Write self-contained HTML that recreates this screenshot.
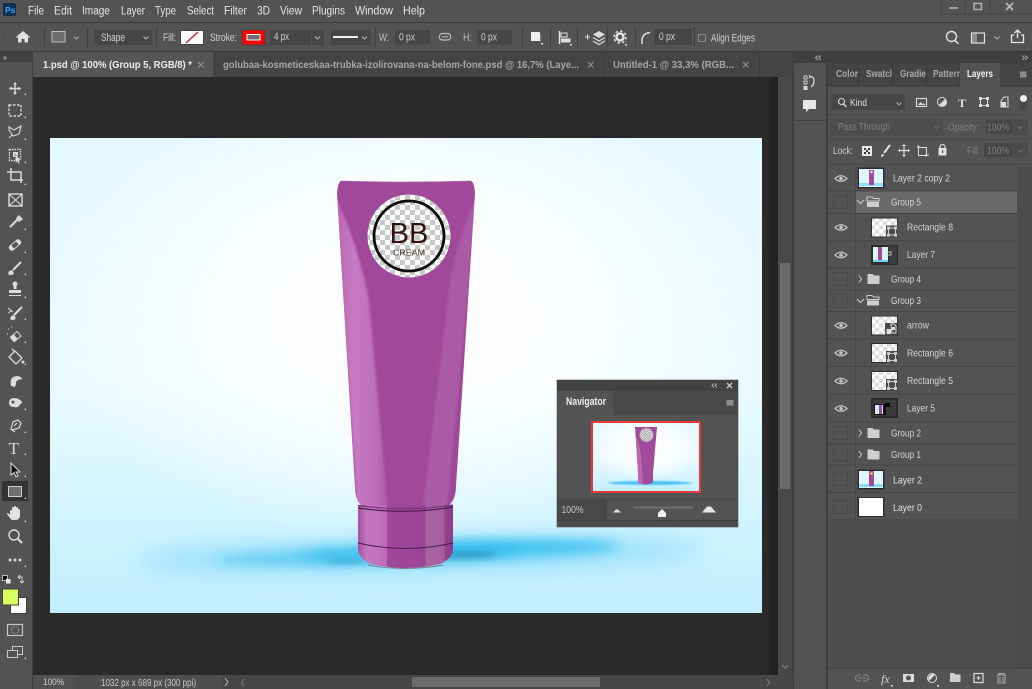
<!DOCTYPE html>
<html><head><meta charset="utf-8"><style>
html,body{margin:0;padding:0;background:#535353;width:1032px;height:689px;overflow:hidden}
svg{display:block;position:absolute;left:0;top:0}
text{font-family:"Liberation Sans",sans-serif;font-size:10.5px;fill:#d8d8d8}
.m{font-size:11.5px;fill:#e4e4e4}
.o{font-size:11px;fill:#cfcfcf}
.tb{font-size:10.5px;font-weight:bold;fill:#a6a6a6}
.l{font-size:10.5px;fill:#d4d4d4}
.t{font-size:10.5px;fill:#a8a8a8;font-weight:bold}
</style></head><body>
<svg width="1032" height="689" viewBox="0 0 1032 689" xmlns="http://www.w3.org/2000/svg">
<defs>
<pattern id="ck" width="10" height="10" patternUnits="userSpaceOnUse"><rect width="10" height="10" fill="#fff"/><rect width="5" height="5" fill="#c8c8c8"/><rect x="5" y="5" width="5" height="5" fill="#c8c8c8"/></pattern>
<pattern id="ck2" width="8" height="8" patternUnits="userSpaceOnUse"><rect width="8" height="8" fill="#fff"/><rect width="4" height="4" fill="#dcdcdc"/><rect x="4" y="4" width="4" height="4" fill="#dcdcdc"/></pattern>
<pattern id="ck3" width="2.400" height="2.400" patternUnits="userSpaceOnUse"><rect width="2.400" height="2.400" fill="#eee"/><rect width="1.200" height="1.200" fill="#999"/><rect x="1.200" y="1.200" width="1.200" height="1.200" fill="#999"/></pattern>
<filter id="b1" x="-30%" y="-200%" width="160%" height="500%"><feGaussianBlur stdDeviation=".8"/></filter>
<filter id="b5" x="-30%" y="-30%" width="160%" height="160%"><feGaussianBlur stdDeviation="1.300"/></filter>
<filter id="b10" x="-30%" y="-300%" width="160%" height="700%"><feGaussianBlur stdDeviation="6"/></filter>
<filter id="b20" x="-30%" y="-300%" width="160%" height="700%"><feGaussianBlur stdDeviation="12"/></filter>
<filter id="b4" x="-30%" y="-300%" width="160%" height="700%"><feGaussianBlur stdDeviation="3"/></filter>
<linearGradient id="bgv" x1="0" y1="0" x2="0" y2="1"><stop offset="0" stop-color="#e4f8ff"/><stop offset=".5" stop-color="#ebfaff"/><stop offset=".78" stop-color="#d3f4ff"/><stop offset="1" stop-color="#c1eeff"/></linearGradient>
<radialGradient id="bgr" cx=".5" cy=".36" r=".5"><stop offset="0" stop-color="#fff"/><stop offset=".55" stop-color="#fff" stop-opacity=".75"/><stop offset="1" stop-color="#fff" stop-opacity="0"/></radialGradient>
<clipPath id="bodyclip"><path d="M341 181Q406 183 471 181Q474 182 475 193L456 486Q456 500 448 506H362Q355 500 355 486L337 193Q338 182 341 181Z"/></clipPath>
<linearGradient id="hl" x1="0" y1="0" x2="1" y2="0"><stop offset="0" stop-color="#bb68b6"/><stop offset=".35" stop-color="#cd82c9"/><stop offset=".8" stop-color="#c070bb"/><stop offset="1" stop-color="#ac58a7"/></linearGradient>
<linearGradient id="capg" x1="0" y1="0" x2="1" y2="0"><stop offset="0" stop-color="#a550a0"/><stop offset=".1" stop-color="#c478bf"/><stop offset=".3" stop-color="#c06cbb"/><stop offset=".31" stop-color="#a0479a"/><stop offset=".7" stop-color="#9b4595"/><stop offset=".72" stop-color="#aa62a5"/><stop offset=".9" stop-color="#a55fa0"/><stop offset=".92" stop-color="#954190"/><stop offset="1" stop-color="#8e3c88"/></linearGradient>
<g id="chk"><rect x="-7.500" y="-6.500" width="14" height="13" fill="none" stroke="#494949" stroke-width="1"/></g>
<g id="eye"><path d="M-6 0Q0 -5.500 6 0Q0 5.500 -6 0Z" fill="none" stroke="#c4c4c4" stroke-width="1.200"/><circle r="1.800" fill="#c4c4c4"/></g>
<g id="fold"><path d="M-6 -5h5l1.500 1.500h5.500v8.500h-12z" fill="#cfcfcf"/></g>
<g id="foldo"><path d="M-6 -5h5l1.500 1.500h5.500v2.500h-12z" fill="none" stroke="#cfcfcf"/><rect x="-6" y="0" width="12" height="5" fill="#cfcfcf"/></g>
<g id="vmask"><rect x="0" y="0" width="27" height="20" fill="#2d2d2d"/><rect x="1" y="1" width="25" height="18" fill="url(#ck2)"/></g>
<g id="shp"><rect x="15" y="8" width="12" height="12" fill="#4a4a4a"/><rect x="17.500" y="10.500" width="7" height="7" fill="none" stroke="#ccc" stroke-width="1"/><g fill="#ccc"><rect x="16" y="9" width="3" height="3"/><rect x="23" y="9" width="3" height="3"/><rect x="16" y="16" width="3" height="3"/><rect x="23" y="16" width="3" height="3"/></g></g>
<path id="tri" d="M0 2h2v-2z" fill="#cfcfcf"/>
</defs>

<rect width="1032" height="689" fill="#535353"/>
<!-- menu bar -->
<rect x="0" y="22" width="1032" height="1" fill="#3a3a3a"/>
<rect x="3" y="3" width="13" height="13" rx="1.500" fill="#0e2f52"/>
<text x="5" y="13" style="font-size:8.500px;font-weight:bold;fill:#31a8ff">Ps</text>
<text class="m" x="28" y="14.500" textLength="16" lengthAdjust="spacingAndGlyphs">File</text><text class="m" x="54" y="14.500" textLength="18" lengthAdjust="spacingAndGlyphs">Edit</text><text class="m" x="82" y="14.500" textLength="28" lengthAdjust="spacingAndGlyphs">Image</text><text class="m" x="121" y="14.500" textLength="24" lengthAdjust="spacingAndGlyphs">Layer</text><text class="m" x="155" y="14.500" textLength="21" lengthAdjust="spacingAndGlyphs">Type</text><text class="m" x="187" y="14.500" textLength="27" lengthAdjust="spacingAndGlyphs">Select</text><text class="m" x="224" y="14.500" textLength="23" lengthAdjust="spacingAndGlyphs">Filter</text><text class="m" x="257" y="14.500" textLength="13" lengthAdjust="spacingAndGlyphs">3D</text><text class="m" x="280" y="14.500" textLength="22" lengthAdjust="spacingAndGlyphs">View</text><text class="m" x="312" y="14.500" textLength="33" lengthAdjust="spacingAndGlyphs">Plugins</text><text class="m" x="355" y="14.500" textLength="38" lengthAdjust="spacingAndGlyphs">Window</text><text class="m" x="403" y="14.500" textLength="22" lengthAdjust="spacingAndGlyphs">Help</text>
<path d="M941 0v14h91M965 0v14M990 0v14" fill="none" stroke="#454545"/>
<rect x="949" y="7" width="9" height="2" fill="#9a9a9a"/>
<rect x="974" y="3.500" width="7.500" height="6" fill="none" stroke="#b0b0b0" stroke-width="1.500"/>
<path d="M1006 3l7 7M1013 3l-7 7" stroke="#b8b8b8" stroke-width="1.800"/>

<!-- options bar -->
<path d="M23 31l-7.500 6.500h2.500v5h3.500v-3.500h3v3.500h3.500v-5h2.500z" fill="#e2e2e2"/>
<path d="M3.500 29v15" stroke="#484848" stroke-dasharray="1 1"/>
<g stroke="#404040"><path d="M44.500 27v20M87.500 27v20M156.500 27v20M375.500 27v20M522.500 27v20M550.500 27v20M577.500 27v20M607.500 27v20M635.500 27v20M694.500 27v20"/></g>
<rect x="52" y="31.500" width="13" height="10.500" fill="#6c6c6c" stroke="#bdbdbd" stroke-width="1"/>
<path d="M74 36.500l2.500 2.500 2.500-2.500" fill="none" stroke="#aaa"/>
<rect x="94" y="30" width="58" height="15" fill="#464646"/><text class="o" x="101" y="41" textLength="24" lengthAdjust="spacingAndGlyphs">Shape</text>
<path d="M143.500 36.500l2.500 2.500 2.500-2.500" fill="none" stroke="#bbb"/>
<text class="o" x="163" y="41" textLength="13" lengthAdjust="spacingAndGlyphs">Fill:</text>
<rect x="180" y="30" width="24" height="15" fill="#3f3f3f"/><rect x="181" y="31" width="22" height="13" fill="#fff"/><path d="M186 43l12-11" stroke="#d8232a" stroke-width="1.500"/>
<text class="o" x="210" y="41" textLength="27" lengthAdjust="spacingAndGlyphs">Stroke:</text>
<rect x="242" y="30" width="23" height="15" fill="#ff0000" stroke="#444" stroke-width="1"/><rect x="247" y="34.500" width="13" height="5.500" fill="#6f6f6f" stroke="#fff" stroke-width="1"/>
<rect x="270" y="30" width="41" height="15" fill="#464646"/><rect x="312" y="30" width="12" height="15" fill="#464646"/><text class="o" x="274" y="40" textLength="15" lengthAdjust="spacingAndGlyphs">4 px</text>
<path d="M315 36.500l2.500 2.500 2.500-2.500" fill="none" stroke="#bbb"/>
<rect x="331" y="30" width="40" height="15" fill="#464646"/><rect x="333" y="36" width="25" height="2" fill="#f0f0f0"/><path d="M362 36.500l2.500 2.500 2.500-2.500" fill="none" stroke="#bbb"/>
<text class="o" x="379" y="41" style="fill:#bdbdbd" textLength="10" lengthAdjust="spacingAndGlyphs">W:</text>
<rect x="395" y="30" width="35" height="14.500" fill="#464646"/><text class="o" x="399" y="40.500" textLength="16" lengthAdjust="spacingAndGlyphs">0 px</text>
<path d="M445 33.500h-2.500a3.200 3.200 0 0 0 0 6.500h2.500M445 33.500h2.500a3.200 3.200 0 0 1 0 6.500h-2.500M442 36.800h6" fill="none" stroke="#bdbdbd" stroke-width="1.200"/>
<text class="o" x="463" y="41" style="fill:#bdbdbd" textLength="9" lengthAdjust="spacingAndGlyphs">H:</text>
<rect x="477" y="30" width="35" height="14.500" fill="#464646"/><text class="o" x="481" y="40.500" textLength="16" lengthAdjust="spacingAndGlyphs">0 px</text>
<rect x="531" y="32" width="9" height="9" fill="#efefef"/><rect x="540" y="34" width="1.500" height="8" fill="#777"/><rect x="541" y="43" width="2" height="1.500" fill="#ddd"/>
<path d="M559.500 31v13" stroke="#e0e0e0" stroke-width="1.500"/><rect x="561" y="33" width="6" height="4" fill="none" stroke="#e0e0e0"/><rect x="561" y="38.500" width="9.500" height="4" fill="#e0e0e0"/><rect x="570" y="44" width="2" height="1.500" fill="#ddd"/>
<path d="M585 37h5M587.500 34.500v5" stroke="#ddd"/><path d="M593 34.500l6-3.500 6 3.500-6 3.500z" fill="#ddd"/><path d="M593 37.500l6 3.500 6-3.500M593 41l6 3.500 6-3.500" fill="none" stroke="#ddd" stroke-width="1.200"/>
<circle cx="620" cy="37" r="3.500" fill="none" stroke="#e2e2e2" stroke-width="2.500"/><circle cx="620" cy="37" r="6" fill="none" stroke="#e2e2e2" stroke-width="1.500" stroke-dasharray="2.400 2.300"/><rect x="625" y="44" width="2" height="1.500" fill="#ddd"/>
<path d="M642 44v-3.500q0-7 8-8" fill="none" stroke="#e0e0e0" stroke-width="1.500"/>
<rect x="655" y="29.500" width="36" height="14.500" fill="#464646" stroke="#3c3c3c"/><text class="o" x="659" y="40" textLength="16" lengthAdjust="spacingAndGlyphs">0 px</text>
<rect x="698.500" y="34.500" width="7" height="7" rx="1" fill="none" stroke="#8a8a8a"/>
<text class="o" x="711" y="41.500" textLength="44" lengthAdjust="spacingAndGlyphs">Align Edges</text>
<circle cx="951.500" cy="36.500" r="5" fill="none" stroke="#e2e2e2" stroke-width="1.400"/><path d="M955 40.500l3.500 3.500" stroke="#e2e2e2" stroke-width="1.500"/>
<rect x="971.500" y="33" width="13" height="10" fill="none" stroke="#e2e2e2" stroke-width="1.200"/><rect x="972" y="33.500" width="5" height="9" fill="#8e8e8e"/>
<path d="M994.500 36.500l2.500 2.500 2.500-2.500" fill="none" stroke="#aaa"/>
<path d="M1014 35h-2.500v7.500h12v-7.500h-2.500M1017.500 38v-7M1014.500 33l3-3 3 3" fill="none" stroke="#e6e6e6" stroke-width="1.300"/>
<rect x="0" y="51" width="1032" height="1" fill="#3c3c3c"/>

<!-- tab row -->
<rect x="33" y="52" width="760" height="25" fill="#444"/>
<rect x="33" y="52" width="180" height="25" fill="#555"/>
<text x="43" y="68" style="font-size:10.500px;font-weight:bold;fill:#ededed" textLength="149" lengthAdjust="spacingAndGlyphs">1.psd @ 100% (Group 5, RGB/8) *</text>
<path d="M198 62l5.500 5.500M203.500 62l-5.500 5.500" stroke="#999" stroke-width=".9"/>
<text class="tb" x="223" y="68" textLength="356" lengthAdjust="spacingAndGlyphs">golubaa-kosmeticeskaa-trubka-izolirovana-na-belom-fone.psd @ 16,7% (Laye...</text>
<path d="M588 62l5.500 5.500M593.500 62l-5.500 5.500" stroke="#999" stroke-width=".9"/>
<path d="M603.500 52v25M759.500 52v25" stroke="#3c3c3c"/>
<text class="tb" x="613" y="68" textLength="121" lengthAdjust="spacingAndGlyphs">Untitled-1 @ 33,3% (RGB...</text>
<path d="M743 62l5.500 5.500M748.500 62l-5.500 5.500" stroke="#999" stroke-width=".9"/>

<!-- toolbar -->
<rect x="0" y="52" width="33" height="637" fill="#535353"/>
<rect x="0" y="52" width="32" height="10" fill="#424242"/>
<text x="3" y="60" style="font-size:7px;fill:#b5b5b5;font-weight:bold">»</text>
<path d="M7 65h14" stroke="#484848" stroke-dasharray="1 1"/>
<rect x="32" y="52" width="1" height="637" fill="#3e3e3e"/>

<!-- canvas -->
<rect x="33" y="77" width="745" height="598" fill="#2a2a2a"/>
<rect x="770" y="77" width="8" height="598" fill="#232323"/>
<rect x="778" y="77" width="15" height="598" fill="#494949"/>
<rect x="792" y="77" width="1" height="598" fill="#3e3e3e"/>
<rect x="780" y="263" width="10" height="226" fill="#6b6b6b"/>
<path d="M782 665l3 3 3-3" fill="none" stroke="#888"/>

<!-- image -->
<svg x="50" y="138" width="712" height="475" viewBox="50 138 712 475">
<rect x="50" y="138" width="712" height="475" fill="url(#bgv)"/>
<rect x="50" y="138" width="712" height="475" fill="url(#bgr)"/>
<g transform="rotate(-1.200 420 552)">
<ellipse cx="420" cy="555" rx="285" ry="13" fill="#7ad6f7" opacity=".85" filter="url(#b20)"/>
<ellipse cx="500" cy="550" rx="120" ry="8" fill="#33bdf0" opacity=".9" filter="url(#b10)"/>
<ellipse cx="310" cy="556" rx="95" ry="5" fill="#3fc0ef" opacity=".8" filter="url(#b10)"/>
<ellipse cx="410" cy="553" rx="110" ry="7" fill="#2ab8ec" opacity=".85" filter="url(#b10)"/>
<ellipse cx="470" cy="556" rx="26" ry="3" fill="#2a7ea3" opacity=".6" filter="url(#b4)"/>
<ellipse cx="345" cy="560" rx="22" ry="2" fill="#2a8fbf" opacity=".5" filter="url(#b4)"/>
</g>
<!-- tube body -->
<path d="M341 181Q406 183 471 181Q474 182 475 193L456 486Q456 500 448 506H362Q355 500 355 486L337 193Q338 182 341 181Z" fill="#a0489a"/>
<g clip-path="url(#bodyclip)">
<path d="M336 197Q358 245 369 300L388 508H350L336 300Z" fill="url(#hl)" opacity=".9" filter="url(#b5)"/>
<path d="M337 230L358 506H350L335 260Z" fill="#a0489a" opacity=".55" filter="url(#b5)"/>
<path d="M476 197Q455 245 449 290L423 508H447L468 290Z" fill="#b26bad" opacity=".6" filter="url(#b5)"/>
</g>
<path d="M341 181Q406 183 471 181" fill="none" stroke="#b569b0" stroke-width=".8"/>
<!-- cap -->
<path d="M358 505H453V549Q453 558 440 564Q405 572 371 564Q358 558 358 549Z" fill="url(#capg)"/>
<path d="M368 565Q405 572 443 565" fill="none" stroke="#6b5a58" stroke-width=".9" opacity=".7"/>
<path d="M358 508Q405 515 453 507" fill="none" stroke="#4f1f4d" stroke-width="1.300"/>
<path d="M358 505.500Q405 512 453 505" fill="none" stroke="#7c3479" stroke-width="1.300"/>
<path d="M358 543Q405 554 453 543" fill="none" stroke="#4a1a48" stroke-width="1"/>
<!-- label -->
<circle cx="409" cy="236" r="41.500" fill="url(#ck)"/>
<circle cx="409" cy="236" r="35" fill="none" stroke="#0c0c0c" stroke-width="2.800"/>
<text x="409" y="243" text-anchor="middle" style="font-size:29px;fill:#33130f">BB</text>
<text x="393" y="255.500" style="font-size:8.500px;fill:#4b3a30" textLength="32" lengthAdjust="spacingAndGlyphs">CREAM</text>
</svg>

<!-- tool icons -->
<g fill="none" stroke="#dcdcdc" stroke-width="1.400">
<path d="M15 83v11M9.500 88.500h11"/><path d="M15 82l-2 2.500h4zM15 95l-2-2.500h4zM9 88.500l2.500-2v4zM21 88.500l-2.500-2v4z" fill="#dcdcdc" stroke="none"/>
<rect x="9" y="105" width="12" height="11" stroke-dasharray="2.500 1.500"/>
<path d="M9 127l5 3 7-4-2 8-6 2-4-6zM12 135l-3 3" stroke-width="1.100"/>
<rect x="9.500" y="149.500" width="11" height="11" stroke-dasharray="1.500 1"/>
<path d="M13 152h5v5h-5z" fill="#dcdcdc" stroke="none"/><path d="M15 154l6 6-2 .5 1 3-1.500.5-1-2.500-2 1.500z" fill="#dcdcdc" stroke="#535353" stroke-width=".5"/>
<path d="M7 172h14v11M11 168v12h12" stroke-width="1.500"/>
<rect x="9" y="194" width="13" height="12"/><path d="M9 194l13 12M22 194l-13 12" stroke-width="1"/>
<path d="M10 227l8-8" stroke-width="2"/><path d="M19 216l3 3-3 2-2-3z" fill="#dcdcdc"/>
<g transform="rotate(-40 15 245)"><rect x="8" y="242" width="14" height="6" rx="2.500" fill="#dcdcdc" stroke="none"/><rect x="12" y="243" width="6" height="4" fill="#535353" stroke="none"/></g>
<path d="M9 274q0-3 3-3l1 2q-1 2-4 1z" fill="#dcdcdc"/><path d="M13 270l8-8" stroke-width="2"/>
<path d="M15 283v6" stroke-width="3"/><circle cx="15" cy="284" r="2.500" fill="#dcdcdc" stroke="none"/><rect x="9" y="290" width="12" height="3" fill="#dcdcdc" stroke="none"/><path d="M9 295.500h12" stroke-width="1"/>
<path d="M11 319q0-3 3-3l1 2q-1 2-4 1z" fill="#dcdcdc"/><path d="M14 315l8-8" stroke-width="2"/><path d="M8 308l5 4M8 313l3-2" stroke-width="1"/>
<g transform="rotate(-40 16 337)"><rect x="11" y="333" width="10" height="7" rx="1" fill="#dcdcdc" stroke="none"/><rect x="16" y="334" width="4" height="5" fill="#535353" stroke="none"/></g><path d="M8 329h1M11 327h1M7 334h1" stroke-width="1"/>
<path d="M9 357l6-6 7 7-6 6z" stroke-width="1.300"/><path d="M12 349l3 3"/><circle cx="23" cy="362" r="1.500" fill="#dcdcdc" stroke="none"/>
<path d="M11 386q-1-6 1-8q2-2 6-2q4 1 4 3l-4 1q-2 1-2 4l-1 3z" fill="#dcdcdc" stroke="none"/>
<path d="M9 403q0-5 5-5q5 0 8 4l-1 2q-1 0-2 2q-2 2-5 1q-5 0-5-4z" fill="#dcdcdc" stroke="none"/><circle cx="13" cy="402" r="1.500" fill="#535353" stroke="none"/>
<path d="M15 432l-4-3 2-7 5-2 3 3-2 5-7 2zM14 426l3-3" stroke-width="1.200"/>
</g>
<text x="8.500" y="454" style="font-family:'Liberation Serif',serif;font-size:17px;fill:#dcdcdc">T</text>
<path d="M11 463v12l3-2.500 2 4.500 2-1-2-4h4z" fill="#111" stroke="#dcdcdc" stroke-width="1"/>
<rect x="2" y="481" width="26" height="20" fill="#333"/>
<rect x="8.500" y="486.500" width="13" height="10" fill="#707070" stroke="#cfcfcf" stroke-width="1"/>
<path d="M10 515v-4q0-1 1-1t1 1l0-3q0-1 1-1t1 1v-1q0-1 1-1t1 1v1q0-1 1-1t1 1v2q0-1 1-1t1 1v5q0 5-5 5h-2q-2 0-3-2l-3-4q0-1 1-1z" fill="#e2e2e2"/>
<circle cx="14" cy="535" r="5" fill="none" stroke="#dcdcdc" stroke-width="1.400"/><path d="M18 539l4 4" stroke="#dcdcdc" stroke-width="2"/>
<g fill="#dcdcdc"><circle cx="10" cy="560" r="1.500"/><circle cx="15" cy="560" r="1.500"/><circle cx="20" cy="560" r="1.500"/></g>
<rect x="2.500" y="575.500" width="5" height="5" fill="#111" stroke="#ddd" stroke-width=".8"/><rect x="6" y="579" width="4.500" height="4.500" fill="#eee"/>
<path d="M18 577h4v5M20 581l2 2 2-2M18 577l2-2M18 577l2 2" fill="none" stroke="#ddd" stroke-width=".9"/>
<rect x="10.500" y="597.500" width="16" height="16" fill="#fff" stroke="#3e3e3e"/>
<rect x="2.500" y="589" width="16" height="16" fill="#d7ff5d" stroke="#3e3e3e"/>
<rect x="7.500" y="624.500" width="15" height="11" fill="none" stroke="#c8c8c8" stroke-width="1.200"/><circle cx="15" cy="630" r="3.500" fill="none" stroke="#9c9c9c" stroke-dasharray="1.500 1"/>
<rect x="12.500" y="646.500" width="10" height="8" fill="#535353" stroke="#c8c8c8"/><rect x="7.500" y="650.500" width="10" height="7" fill="#535353" stroke="#c8c8c8"/>
<g><use href="#tri" x="24" y="93"/><use href="#tri" x="24" y="116"/><use href="#tri" x="24" y="138"/><use href="#tri" x="24" y="161"/><use href="#tri" x="24" y="183"/><use href="#tri" x="24" y="228"/><use href="#tri" x="24" y="251"/><use href="#tri" x="24" y="273"/><use href="#tri" x="24" y="296"/><use href="#tri" x="24" y="318"/><use href="#tri" x="24" y="341"/><use href="#tri" x="24" y="363"/><use href="#tri" x="24" y="408"/><use href="#tri" x="24" y="431"/><use href="#tri" x="24" y="453"/><use href="#tri" x="24" y="475"/><use href="#tri" x="24" y="497"/><use href="#tri" x="24" y="520"/><use href="#tri" x="24" y="565"/><use href="#tri" x="24" y="657"/></g>

<!-- status bar -->
<rect x="33" y="675" width="760" height="14" fill="#474747"/>
<rect x="47" y="675" width="175" height="14" fill="#4e4e4e"/>
<rect x="33" y="675" width="42" height="14" fill="#525252"/>
<text x="43" y="685" style="font-size:9.500px;fill:#cfcfcf" textLength="21" lengthAdjust="spacingAndGlyphs">100%</text>
<text x="101" y="686" style="font-size:10px;fill:#c8c8c8" textLength="95" lengthAdjust="spacingAndGlyphs">1032 px x 689 px (300 ppi)</text>
<path d="M225 678l3 4-3 4" fill="none" stroke="#bbb"/>
<path d="M244 679l-2.500 3.500 2.500 3.500M767 679l2.500 3.500-2.500 3.500" fill="none" stroke="#808080"/>
<rect x="412" y="677" width="188" height="10" fill="#6b6b6b"/>

<!-- dock -->
<rect x="793" y="52" width="239" height="11" fill="#3f3f3f"/>
<path d="M818 55.500l-2.500 2.200 2.500 2.200M821 55.500l-2.500 2.200 2.500 2.200M1022 55.500l2.500 2.200-2.500 2.200M1025 55.500l2.500 2.200-2.500 2.200" fill="none" stroke="#b0b0b0" stroke-width=".9"/>
<rect x="793" y="63" width="1" height="626" fill="#3c3c3c"/>
<rect x="793" y="120" width="34" height="1" fill="#404040"/>
<rect x="826" y="63" width="2" height="626" fill="#3c3c3c"/>
<path d="M801 66h15" stroke="#484848" stroke-dasharray="1 1"/>
<rect x="804" y="76" width="3" height="3" fill="none" stroke="#ddd" stroke-width=".9"/><rect x="804" y="81" width="3" height="3" fill="none" stroke="#ddd" stroke-width=".9"/><rect x="803.500" y="86" width="4" height="4" fill="#ddd"/>
<path d="M809 78l1.500-1.500-1.500-1.500M810 76.500q4 0 4 4.500q0 4-3 6" fill="none" stroke="#ddd" stroke-width="1.200"/>
<path d="M803 100h13v9h-7l-3 3v-3h-3z" fill="#e6e6e6"/>

<!-- panel tabs -->
<rect x="828" y="63" width="204" height="24" fill="#444"/>
<g stroke="#3a3a3a"><path d="M858.500 63v24M892.500 63v24M926.500 63v24M960 63v24"/></g>
<rect x="960" y="63" width="40" height="24" fill="#535353"/>
<text class="t" x="836" y="77" textLength="22" lengthAdjust="spacingAndGlyphs">Color</text>
<text class="t" x="866" y="77" textLength="26" lengthAdjust="spacingAndGlyphs">Swatcl</text>
<text class="t" x="900" y="77" textLength="26" lengthAdjust="spacingAndGlyphs">Gradie</text>
<text class="t" x="933" y="77" textLength="27" lengthAdjust="spacingAndGlyphs">Patterr</text>
<text class="t" x="967" y="77" textLength="26" lengthAdjust="spacingAndGlyphs" style="fill:#f0f0f0">Layers</text>
<rect x="1020" y="71.500" width="6.500" height="6" fill="#8c8c8c"/>

<!-- panel body -->
<rect x="828" y="87" width="204" height="602" fill="#535353"/>
<rect x="1017" y="166" width="15" height="502" fill="#4c4c4c"/>
<rect x="828" y="520" width="189" height="148" fill="#4f4f4f"/>
<rect x="831" y="94.500" width="74" height="15.500" rx="1" fill="#464646"/>
<circle cx="841.500" cy="101.500" r="3" fill="none" stroke="#ddd" stroke-width="1.100"/><path d="M843.500 104l3 3" stroke="#ddd" stroke-width="1.300"/>
<text x="850" y="106" class="l" style="fill:#dedede" textLength="17" lengthAdjust="spacingAndGlyphs">Kind</text>
<path d="M896.500 102.500l2.500 2.500 2.500-2.500" fill="none" stroke="#aaa"/>
<rect x="916.500" y="98.500" width="10" height="8" fill="none" stroke="#dcdcdc" stroke-width="1.100"/><path d="M918 105l2.500-3 2 2 1-1 2 2z" fill="#dcdcdc"/>
<circle cx="942" cy="102" r="4.500" fill="none" stroke="#dcdcdc"/><path d="M942 97.500a4.500 4.500 0 0 1 0 9z" fill="#dcdcdc" transform="rotate(45 942 102)"/>
<text x="958" y="107" style="font-family:'Liberation Serif',serif;font-size:12px;fill:#dcdcdc;font-weight:bold">T</text>
<rect x="980.500" y="98.500" width="7" height="7" fill="none" stroke="#dcdcdc"/><g fill="#dcdcdc"><rect x="979" y="97" width="3" height="3"/><rect x="986" y="97" width="3" height="3"/><rect x="979" y="104" width="3" height="3"/><rect x="986" y="104" width="3" height="3"/></g>
<path d="M1004 97h4v10h-7v-6z" fill="none" stroke="#dcdcdc"/><rect x="1001" y="102" width="5" height="5" fill="#dcdcdc"/>
<rect x="1020" y="95" width="7" height="15" rx="3.500" fill="#464646"/><circle cx="1023.500" cy="98.500" r="3.500" fill="#eee"/>
<rect x="828" y="114" width="189" height="1" fill="#494949"/>
<rect x="831" y="119" width="111" height="16" rx="1" fill="#4e4e4e" stroke="#4a4a4a"/>
<text x="838" y="130" style="font-size:10.500px;fill:#808080" textLength="52" lengthAdjust="spacingAndGlyphs">Pass Through</text>
<path d="M934 126l2.500 2.500 2.500-2.500" fill="none" stroke="#707070"/>
<text x="948" y="130.500" style="font-size:10.500px;fill:#808080" textLength="31" lengthAdjust="spacingAndGlyphs">Opacity:</text>
<rect x="986" y="120" width="27" height="14" fill="#474747"/><text x="987" y="130.500" style="font-size:10.500px;fill:#7e7e7e" textLength="22" lengthAdjust="spacingAndGlyphs">100%</text>
<rect x="1014" y="120" width="13" height="14" fill="#4b4b4b" stroke="#484848"/><path d="M1018 126l2.500 2.500 2.500-2.500" fill="none" stroke="#707070"/>
<rect x="828" y="138.500" width="204" height="1" fill="#494949"/>
<text x="833" y="154" style="font-size:10.500px;fill:#cfcfcf" textLength="20" lengthAdjust="spacingAndGlyphs">Lock:</text>
<rect x="862" y="146" width="10" height="10" fill="#e8e8e8"/><g fill="#3a3a3a"><rect x="864" y="148" width="2" height="2"/><rect x="868" y="148" width="2" height="2"/><rect x="866" y="150" width="2" height="2"/><rect x="864" y="152" width="2" height="2"/><rect x="868" y="152" width="2" height="2"/></g>
<path d="M881 157q0-3 2-3l1 1q-1 2-3 2z" fill="#ddd"/><path d="M884 153l6-8" stroke="#ddd" stroke-width="2"/>
<path d="M904 145v11M898.500 150.500h11" stroke="#ddd" stroke-width="1.200"/><path d="M904 144l-2 2h4zM904 157l-2-2h4zM898 150.500l2-2v4zM910 150.500l-2-2v4z" fill="#ddd"/>
<path d="M918.500 147.500h8v8h-8z" fill="none" stroke="#ddd"/><path d="M917 147h3M926 155h3M918 145v3M926 154v3" stroke="#ddd"/>
<path d="M940 148v-1a2.500 2.500 0 0 1 5 0v1" fill="none" stroke="#ddd" stroke-width="1.200"/><rect x="938.500" y="148" width="8" height="7.500" fill="#e2e2e2"/><rect x="942" y="150" width="1.200" height="3" fill="#535353"/>
<text x="967" y="154" style="font-size:10.500px;fill:#808080" textLength="13" lengthAdjust="spacingAndGlyphs">Fill:</text>
<rect x="984" y="143" width="29" height="14" fill="#474747"/><text x="987" y="154" style="font-size:10.500px;fill:#7e7e7e" textLength="22" lengthAdjust="spacingAndGlyphs">100%</text>
<rect x="1014" y="143" width="13" height="14" fill="#4b4b4b" stroke="#484848"/><path d="M1018 149.500l2.500 2.500 2.500-2.500" fill="none" stroke="#707070"/>
<rect x="828" y="164" width="204" height="1" fill="#484848"/>

<!-- layer rows -->
<rect x="855" y="191" width="162" height="22" fill="#6a6a6a"/>
<g fill="#464646">
<rect x="828" y="190.500" width="189" height="1"/><rect x="828" y="213" width="189" height="1"/><rect x="828" y="240.500" width="189" height="1"/><rect x="828" y="267.500" width="189" height="1"/><rect x="828" y="289.500" width="189" height="1"/><rect x="828" y="311" width="189" height="1"/><rect x="828" y="338.500" width="189" height="1"/><rect x="828" y="366" width="189" height="1"/><rect x="828" y="393.500" width="189" height="1"/><rect x="828" y="421.500" width="189" height="1"/><rect x="828" y="443.500" width="189" height="1"/><rect x="828" y="464.500" width="189" height="1"/><rect x="828" y="492" width="189" height="1"/><rect x="828" y="519.500" width="189" height="1"/>
<rect x="855" y="166" width="1" height="354"/>
</g>
<use href="#eye" x="841" y="178.500"/><use href="#eye" x="841" y="227.500"/><use href="#eye" x="841" y="255"/><use href="#eye" x="841" y="325.500"/><use href="#eye" x="841" y="353"/><use href="#eye" x="841" y="381"/><use href="#eye" x="841" y="408.500"/>
<use href="#chk" x="841" y="202"/><use href="#chk" x="841" y="279"/><use href="#chk" x="841" y="300.500"/><use href="#chk" x="841" y="433"/><use href="#chk" x="841" y="454.500"/><use href="#chk" x="841" y="479.500"/><use href="#chk" x="841" y="507"/>

<rect x="857.500" y="167.500" width="27" height="21" fill="#2d2d2d"/><rect x="859" y="169" width="24" height="18" fill="#dff6ff"/><rect x="859" y="183" width="24" height="3" fill="#8fdcf6"/><rect x="869" y="170" width="5" height="15" fill="#a04a9c"/><circle cx="871.500" cy="172" r="1.200" fill="#eee"/>
<text x="893" y="181.500" class="l" textLength="57" lengthAdjust="spacingAndGlyphs">Layer 2 copy 2</text>
<path d="M857 200l3.500 3.500 3.500-3.500" fill="none" stroke="#ccc"/><use href="#foldo" x="873" y="202"/>
<text x="891" y="205.500" class="l" textLength="30" lengthAdjust="spacingAndGlyphs">Group 5</text>
<use href="#vmask" x="871" y="217.500"/><use href="#shp" x="871" y="217.500"/><text x="907" y="230.500" class="l" textLength="46" lengthAdjust="spacingAndGlyphs">Rectangle 8</text>
<rect x="871" y="245" width="27" height="20" fill="#2d2d2d"/><rect x="873" y="247" width="15" height="15" fill="#d9f5ff"/><rect x="878" y="247" width="4" height="14" fill="#a04a9c"/><rect x="873" y="260" width="15" height="2" fill="#6fd0f2"/><rect x="889" y="246" width="8" height="18" fill="#3d3d3d"/><rect x="887" y="252" width="4" height="3" fill="none" stroke="#ddd" stroke-width=".8"/>
<text x="907" y="258" class="l" textLength="28" lengthAdjust="spacingAndGlyphs">Layer 7</text>
<path d="M859 275.500l2.500 3.500-2.500 3.500" fill="none" stroke="#ccc"/><use href="#fold" x="873.500" y="279"/><text x="891" y="282.500" class="l" textLength="30" lengthAdjust="spacingAndGlyphs">Group 4</text>
<path d="M857 299l3.500 3.500 3.500-3.500" fill="none" stroke="#ccc"/><use href="#foldo" x="873" y="300.500"/><text x="891" y="304" class="l" textLength="30" lengthAdjust="spacingAndGlyphs">Group 3</text>
<use href="#vmask" x="871" y="315.500"/><rect x="885" y="323" width="12" height="12" fill="#4a4a4a"/><rect x="886.500" y="329" width="4.500" height="5" fill="#ddd"/><path d="M891 324h3l2 2v7h-4z" fill="none" stroke="#ddd" stroke-width="1"/><rect x="892" y="327" width="3" height="3" fill="#ddd"/>
<text x="907" y="328.500" class="l" textLength="22" lengthAdjust="spacingAndGlyphs">arrow</text>
<use href="#vmask" x="871" y="343"/><use href="#shp" x="871" y="343"/><text x="907" y="356.500" class="l" textLength="46" lengthAdjust="spacingAndGlyphs">Rectangle 6</text>
<use href="#vmask" x="871" y="371"/><use href="#shp" x="871" y="371"/><text x="907" y="384" class="l" textLength="46" lengthAdjust="spacingAndGlyphs">Rectangle 5</text>
<rect x="871" y="398" width="27" height="20" fill="#2d2d2d"/><rect x="873" y="400" width="23" height="16" fill="#3b3b3b"/><rect x="874" y="404" width="12" height="11" fill="#111"/><rect x="875" y="405" width="8" height="9" fill="#cdf0fb"/><rect x="879" y="405" width="3" height="9" fill="#a04a9c"/><rect x="885" y="403" width="5" height="4" fill="#0a0a0a"/>
<text x="907" y="411.500" class="l" textLength="28" lengthAdjust="spacingAndGlyphs">Layer 5</text>
<path d="M859 429.500l2.500 3.500-2.500 3.500" fill="none" stroke="#ccc"/><use href="#fold" x="873.500" y="433"/><text x="891" y="436.500" class="l" textLength="30" lengthAdjust="spacingAndGlyphs">Group 2</text>
<path d="M859 451l2.500 3.500-2.500 3.500" fill="none" stroke="#ccc"/><use href="#fold" x="873.500" y="454.500"/><text x="891" y="458" class="l" textLength="30" lengthAdjust="spacingAndGlyphs">Group 1</text>
<rect x="857.500" y="469.500" width="27" height="20" fill="#2d2d2d"/><rect x="859" y="471" width="24" height="17" fill="#dff6ff"/><rect x="859" y="484" width="24" height="3" fill="#8fdcf6"/><rect x="869" y="471" width="5" height="15" fill="#a04a9c"/><circle cx="871.500" cy="473.500" r="1.300" fill="#d7e24f"/>
<text x="893" y="483.500" class="l" style="fill:#e2e2e2" textLength="29" lengthAdjust="spacingAndGlyphs">Layer 2</text>
<rect x="857.500" y="497" width="27" height="20" fill="#2d2d2d"/><rect x="859" y="498" width="24" height="18" fill="#fff"/>
<text x="893" y="511" class="l" style="fill:#e2e2e2" textLength="29" lengthAdjust="spacingAndGlyphs">Layer 0</text>

<!-- panel footer -->
<rect x="828" y="667.500" width="204" height="1" fill="#444"/>
<path d="M861 675h-2.500a3 3 0 0 0 0 6h2.500M863 675h2.500a3 3 0 0 1 0 6h-2.500M858 678h8" fill="none" stroke="#808080" stroke-width="1.200"/>
<text x="881" y="683" style="font-family:'Liberation Serif',serif;font-style:italic;font-size:12px;fill:#d8d8d8">fx</text><rect x="891" y="685" width="2" height="1.500" fill="#ddd"/>
<rect x="903" y="674" width="11" height="8" fill="#dcdcdc"/><circle cx="908.500" cy="678" r="2.500" fill="#535353"/>
<circle cx="932" cy="678" r="4.500" fill="none" stroke="#dcdcdc"/><path d="M929 681a4.500 4.500 0 0 1 6-6.300z" fill="#dcdcdc"/><rect x="937" y="685" width="2" height="1.500" fill="#ddd"/>
<path d="M950 673h4l1.500 1.500h5v7.500h-10.500z" fill="#cfcfcf"/>
<rect x="974" y="673.500" width="9" height="9" fill="none" stroke="#dcdcdc" stroke-width="1.200"/><path d="M978.500 676v4M976.500 678h4" stroke="#dcdcdc"/>
<path d="M997 675h9M999 675v-1.500h5v1.500M998 676v7h7v-7" fill="none" stroke="#aaa" stroke-width="1.100"/><path d="M1000 677v5M1003 677v5" stroke="#aaa"/>

<!-- navigator -->
<rect x="557" y="380" width="181" height="147" fill="#535353" stroke="#3a3a3a" stroke-width=".5"/>
<rect x="557" y="380" width="181" height="11" fill="#424242"/>
<rect x="613" y="391" width="125" height="24" fill="#494949"/>
<rect x="557" y="391" width="56" height="24" fill="#535353"/>
<path d="M714 383.500l-2 2 2 2M717 383.500l-2 2 2 2" fill="none" stroke="#b0b0b0" stroke-width=".9"/>
<path d="M727 383l5 5M732 383l-5 5" stroke="#ccc" stroke-width="1.300"/>
<text x="566" y="405" style="font-size:11px;font-weight:bold;fill:#efefef" textLength="40" lengthAdjust="spacingAndGlyphs">Navigator</text>
<rect x="726.500" y="400" width="7" height="5.500" fill="#8c8c8c"/>
<svg x="591" y="421" width="110" height="72" viewBox="591 421 110 72">
<rect x="591" y="421" width="110" height="72" fill="url(#bgv)"/>
<rect x="591" y="421" width="110" height="72" fill="url(#bgr)"/>
<ellipse cx="650" cy="483" rx="42" ry="2" fill="#35bcef" opacity=".85" filter="url(#b1)"/>
<path d="M635 427H657L653 473V482Q646 487 638 482V473Z" fill="#a24a9c"/>
<path d="M635.500 434Q640 445 641 455L643 484H638V473Z" fill="#bd72b8" opacity=".8"/>
<circle cx="646.500" cy="435" r="6.800" fill="url(#ck3)" stroke="#aaa" stroke-width=".4"/>
<rect x="592" y="422" width="108" height="70" fill="none" stroke="#e8383a" stroke-width="2"/>
</svg>
<rect x="557" y="498.500" width="181" height="1" fill="#464646"/>
<rect x="557" y="499" width="50" height="21" fill="#484848"/>
<text x="561.500" y="513" style="font-size:10px;fill:#c8c8c8" textLength="22" lengthAdjust="spacingAndGlyphs">100%</text>
<path d="M613 512.500l3-3h2l3 3z" fill="#e2e2e2"/>
<rect x="633" y="506.500" width="60" height="2" fill="#6f6f6f"/>
<path d="M658 517v-4l4-4 4 4v4z" fill="#efefef"/>
<path d="M702 512.500l5-6h4l5 6z" fill="#e6e6e6"/>
<rect x="557" y="520" width="181" height="1" fill="#3f3f3f"/>
<rect x="557" y="521" width="181" height="6" fill="#4d4d4d"/>
</svg>
</body></html>
